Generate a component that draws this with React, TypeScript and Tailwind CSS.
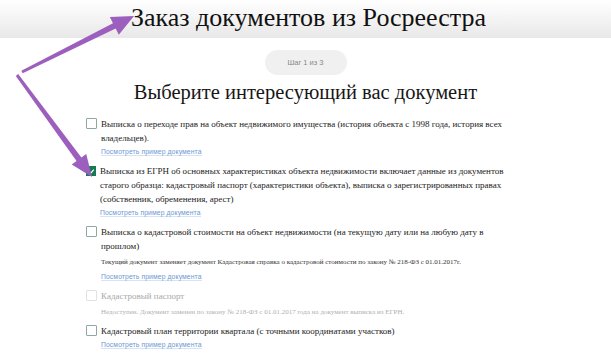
import React from "react";

const serif = { fontFamily: '"Liberation Serif", Tinos, "Times New Roman", serif' };
const sans = { fontFamily: '"Liberation Sans", Arial, sans-serif' };

function Box({ state }: { state: "off" | "on" | "disabled" }) {
  if (state === "on")
    return (
      <div className="w-[10px] h-[10px] mt-[2px] bg-[#137a52] flex items-center justify-center shrink-0">
        <svg width="7" height="7" viewBox="0 0 8 8">
          <path d="M1.5 4.2 L3.2 5.8 L6.6 1.8" stroke="#fff" strokeWidth="1.4" fill="none" />
        </svg>
      </div>
    );
  return (
    <div
      className={
        "w-[11px] h-[11px] mt-[1px] shrink-0 border bg-white rounded-[1px] " +
        (state === "disabled" ? "border-[#e2e2e2]" : "border-[#8ea6a4]")
      }
    />
  );
}

function Link() {
  return (
    <div className="h-[15px] flex items-center">
      <span
        className="text-[6.8px] tracking-[0.1px] text-[#6d98d4] leading-none border-b border-[#d6e3f5]"
        style={sans}
      >
        Посмотреть пример документа
      </span>
    </div>
  );
}

function Note({ children, muted }: { children: React.ReactNode; muted?: boolean }) {
  return (
    <div
      className={
        "h-[15px] mt-[2px] flex items-center text-[7px] whitespace-nowrap " + (muted ? "text-[#b0b0b0]" : "text-[#333]")
      }
      style={serif}
    >
      {children}
    </div>
  );
}

function Item({
  state,
  lines,
  children,
}: {
  state: "off" | "on" | "disabled";
  lines: string[];
  children?: React.ReactNode;
}) {
  return (
    <div className="flex gap-[4px]">
      <Box state={state} />
      <div className="flex flex-col">
        <div
          className={
            "text-[9px] leading-[14px] whitespace-nowrap " + (state === "disabled" ? "text-[#a8a8a8]" : "text-[#222]")
          }
          style={serif}
        >
          {lines.map((l, i) => (
            <div key={i}>{l}</div>
          ))}
        </div>
        {children}
      </div>
    </div>
  );
}

function Arrow({
  tail,
  tip,
  head = 22,
  hw = 10,
  tw = 1.5,
  bw = 3,
}: {
  tail: [number, number];
  tip: [number, number];
  head?: number;
  hw?: number;
  tw?: number;
  bw?: number;
}) {
  const dx = tip[0] - tail[0];
  const dy = tip[1] - tail[1];
  const len = Math.hypot(dx, dy);
  const ux = dx / len;
  const uy = dy / len;
  const nx = -uy;
  const ny = ux;
  const bx = tip[0] - ux * head;
  const by = tip[1] - uy * head;
  const pts = [
    [tail[0] + nx * tw, tail[1] + ny * tw],
    [bx + nx * bw, by + ny * bw],
    [bx + nx * hw, by + ny * hw],
    [tip[0], tip[1]],
    [bx - nx * hw, by - ny * hw],
    [bx - nx * bw, by - ny * bw],
    [tail[0] - nx * tw, tail[1] - ny * tw],
  ]
    .map((p) => p.join(","))
    .join(" ");
  return <polygon points={pts} fill="#9d5fbd" />;
}

export default function App() {
  return (
    <div className="relative w-[611px] h-[358px] overflow-hidden bg-white">
      <div className="h-[38px] bg-gradient-to-b from-white to-[#e8e8e8] flex justify-center items-start pt-[2px]">
        <h1 className="text-[26px] leading-[32px] text-[#111] pl-[6px]" style={serif}>
          Заказ документов из Росреестра
        </h1>
      </div>
      <div className="flex justify-center mt-[12px]">
        <div
          className="w-[82px] h-[25px] rounded-[13px] bg-[#f0f0f0] flex items-center justify-center text-[7.5px] text-[#888]"
          style={sans}
        >
          Шаг 1 из 3
        </div>
      </div>
      <div className="flex justify-center mt-[4px]">
        <h2 className="text-[20.5px] leading-[26px] text-[#161616]" style={serif}>
          Выберите интересующий вас документ
        </h2>
      </div>
      <div className="flex flex-col gap-[4px] ml-[86px] mt-[12px]">
        <Item
          state="off"
          lines={[
            "Выписка о переходе прав на объект недвижимого имущества (история объекта с 1998 года, история всех",
            "владельцев).",
          ]}
        >
          <Link />
        </Item>
        <Item
          state="on"
          lines={[
            "Выписка из ЕГРН об основных характеристиках объекта недвижимости включает данные из документов",
            "старого образца: кадастровый паспорт (характеристики объекта), выписка о зарегистрированных правах",
            "(собственник, обременения, арест)",
          ]}
        >
          <Link />
        </Item>
        <Item
          state="off"
          lines={[
            "Выписка о кадастровой стоимости на объект недвижимости (на текущую дату или на любую дату в",
            "прошлом)",
          ]}
        >
          <Note>
            Текущий документ заменяет документ Кадастровая справка о кадастровой стоимости по закону № 218-ФЗ с
            01.01.2017г.
          </Note>
          <Link />
        </Item>
        <Item state="disabled" lines={["Кадастровый паспорт"]}>
          <Note muted>Недоступен. Документ заменен по закону № 218-ФЗ с 01.01.2017 года на документ выписка из ЕГРН.</Note>
        </Item>
        <Item state="off" lines={["Кадастровый план территории квартала (с точными координатами участков)"]}>
          <Link />
        </Item>
      </div>
      <svg className="absolute inset-0 pointer-events-none" width="611" height="358">
        <Arrow tail={[22, 72]} tip={[134, 16]} hw={10} />
        <Arrow tail={[17, 75]} tip={[92, 177]} hw={9} />
      </svg>
    </div>
  );
}
